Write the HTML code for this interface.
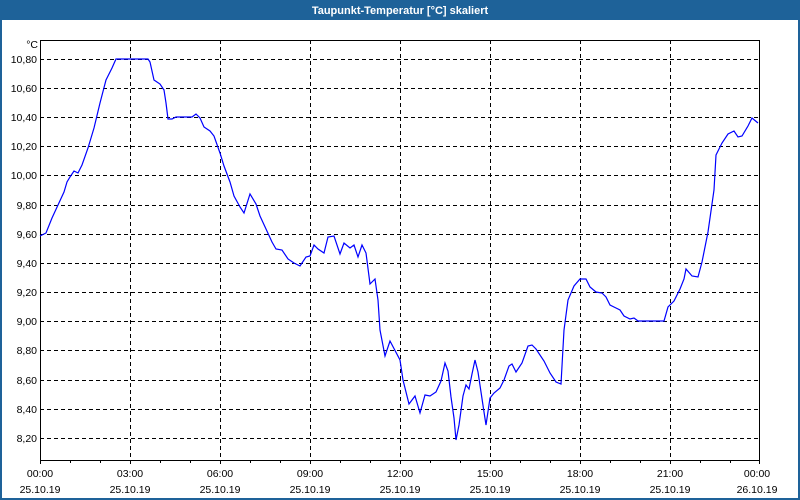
<!DOCTYPE html>
<html><head><meta charset="utf-8"><style>
html,body{margin:0;padding:0;background:#fff;}
body{width:800px;height:500px;overflow:hidden;position:relative;font-family:Tahoma,"Liberation Sans",sans-serif;}
</style></head><body>
<svg width="800" height="500" xmlns="http://www.w3.org/2000/svg" style="position:absolute;left:0;top:0">
<rect x="0" y="0" width="800" height="500" fill="#fff"/>
<rect x="0" y="0" width="800" height="20" fill="#1e6299"/>
<rect x="0" y="0" width="2" height="500" fill="#1e6299"/>
<rect x="798" y="0" width="2" height="500" fill="#1e6299"/>
<rect x="0" y="498" width="800" height="2" fill="#1e6299"/>
<text x="400" y="14" fill="#fff" font-size="11" font-weight="bold" text-anchor="middle" font-family="Liberation Sans, sans-serif">Taupunkt-Temperatur [°C] skaliert</text>
<g stroke="#000" stroke-width="1" stroke-dasharray="4,3" shape-rendering="crispEdges">
<line x1="40" y1="59.5" x2="760" y2="59.5"/><line x1="40" y1="88.5" x2="760" y2="88.5"/><line x1="40" y1="117.5" x2="760" y2="117.5"/><line x1="40" y1="146.5" x2="760" y2="146.5"/><line x1="40" y1="175.5" x2="760" y2="175.5"/><line x1="40" y1="205.5" x2="760" y2="205.5"/><line x1="40" y1="234.5" x2="760" y2="234.5"/><line x1="40" y1="263.5" x2="760" y2="263.5"/><line x1="40" y1="292.5" x2="760" y2="292.5"/><line x1="40" y1="321.5" x2="760" y2="321.5"/><line x1="40" y1="350.5" x2="760" y2="350.5"/><line x1="40" y1="380.5" x2="760" y2="380.5"/><line x1="40" y1="409.5" x2="760" y2="409.5"/><line x1="40" y1="438.5" x2="760" y2="438.5"/>
<line x1="130.5" y1="40" x2="130.5" y2="460"/><line x1="220.5" y1="40" x2="220.5" y2="460"/><line x1="310.5" y1="40" x2="310.5" y2="460"/><line x1="400.5" y1="40" x2="400.5" y2="460"/><line x1="490.5" y1="40" x2="490.5" y2="460"/><line x1="580.5" y1="40" x2="580.5" y2="460"/><line x1="670.5" y1="40" x2="670.5" y2="460"/>
</g>
<g stroke="#000" stroke-width="1" shape-rendering="crispEdges" fill="none">
<rect x="40.5" y="40.5" width="719" height="420"/>
<path d="M40.5 460v4M70.5 460v3M100.5 460v3M130.5 460v4M160.5 460v3M190.5 460v3M220.5 460v4M250.5 460v3M280.5 460v3M310.5 460v4M340.5 460v3M370.5 460v3M400.5 460v4M430.5 460v3M460.5 460v3M490.5 460v4M520.5 460v3M550.5 460v3M580.5 460v4M610.5 460v3M640.5 460v3M670.5 460v4M700.5 460v3M730.5 460v3M759.5 460v4"/>
</g>
<polyline fill="none" stroke="#0000ff" stroke-width="1.2" points="40,236 46,233 52,218 58,205 64,192 67,182 70,177 74,171 78,173 82,165 88,148 94,128 100,103 106,80 112,68 116,59 130,59 148,59 150,62 154,80 160,84 164,90 166,103 168,119 172,119 176,117 192,117 196,114 200,118 204,127 210,131 214,136 220,153 224,166 230,182 234,196 240,207 244,213 250,194 256,204 260,216 266,229 272,242 276,249 282,250 288,259 294,263 300,266 306,257 310,256 314,245 318,249 324,253 328,237 334,236 340,254 344,243 350,248 354,245 358,257 362,245 366,253 370,284 375,279 378,300 380,330 385,356 390,341 400,360 403,380 409,404 415,396 420,413 425,395 430,396 436,392 441,381 445,363 448,371 451,397 454,418 456,440 459,425 463,396 466,385 469,389 472,374 475,360 478,372 481,392 484,412 486,425 490,398 494,393 500,388 504,380 509,366 512,364 516,372 522,363 528,346 532,345 536,349 544,361 550,373 556,382 561,384 564,330 568,300 574,286 580,279 586,279 590,287 596,292 602,293 606,297 610,305 616,308 620,310 624,316 630,319 634,318 638,321 664,321 668,307 674,301 680,289 684,279 686,269 692,276 698,277 702,262 708,232 714,190 716,155 722,143 728,134 734,131 738,137 742,136 748,126 752,118 758,123"/>
<g font-family="Liberation Sans, sans-serif" font-size="10.5" fill="#000" text-anchor="end">
<text x="38" y="48">°C</text>
<text x="37" y="63">10,80</text><text x="37" y="92">10,60</text><text x="37" y="121">10,40</text><text x="37" y="150">10,20</text><text x="37" y="179">10,00</text><text x="37" y="209">9,80</text><text x="37" y="238">9,60</text><text x="37" y="267">9,40</text><text x="37" y="296">9,20</text><text x="37" y="325">9,00</text><text x="37" y="354">8,80</text><text x="37" y="384">8,60</text><text x="37" y="413">8,40</text><text x="37" y="442">8,20</text>
</g>
<g font-family="Liberation Sans, sans-serif" font-size="10.5" fill="#000" text-anchor="middle">
<text x="40" y="477">00:00</text><text x="40" y="493">25.10.19</text>
<text x="130" y="477">03:00</text><text x="130" y="493">25.10.19</text>
<text x="220" y="477">06:00</text><text x="220" y="493">25.10.19</text>
<text x="310" y="477">09:00</text><text x="310" y="493">25.10.19</text>
<text x="400" y="477">12:00</text><text x="400" y="493">25.10.19</text>
<text x="490" y="477">15:00</text><text x="490" y="493">25.10.19</text>
<text x="580" y="477">18:00</text><text x="580" y="493">25.10.19</text>
<text x="670" y="477">21:00</text><text x="670" y="493">25.10.19</text>
<text x="757" y="477">00:00</text><text x="757" y="493">26.10.19</text>
</g>
</svg>
</body></html>
